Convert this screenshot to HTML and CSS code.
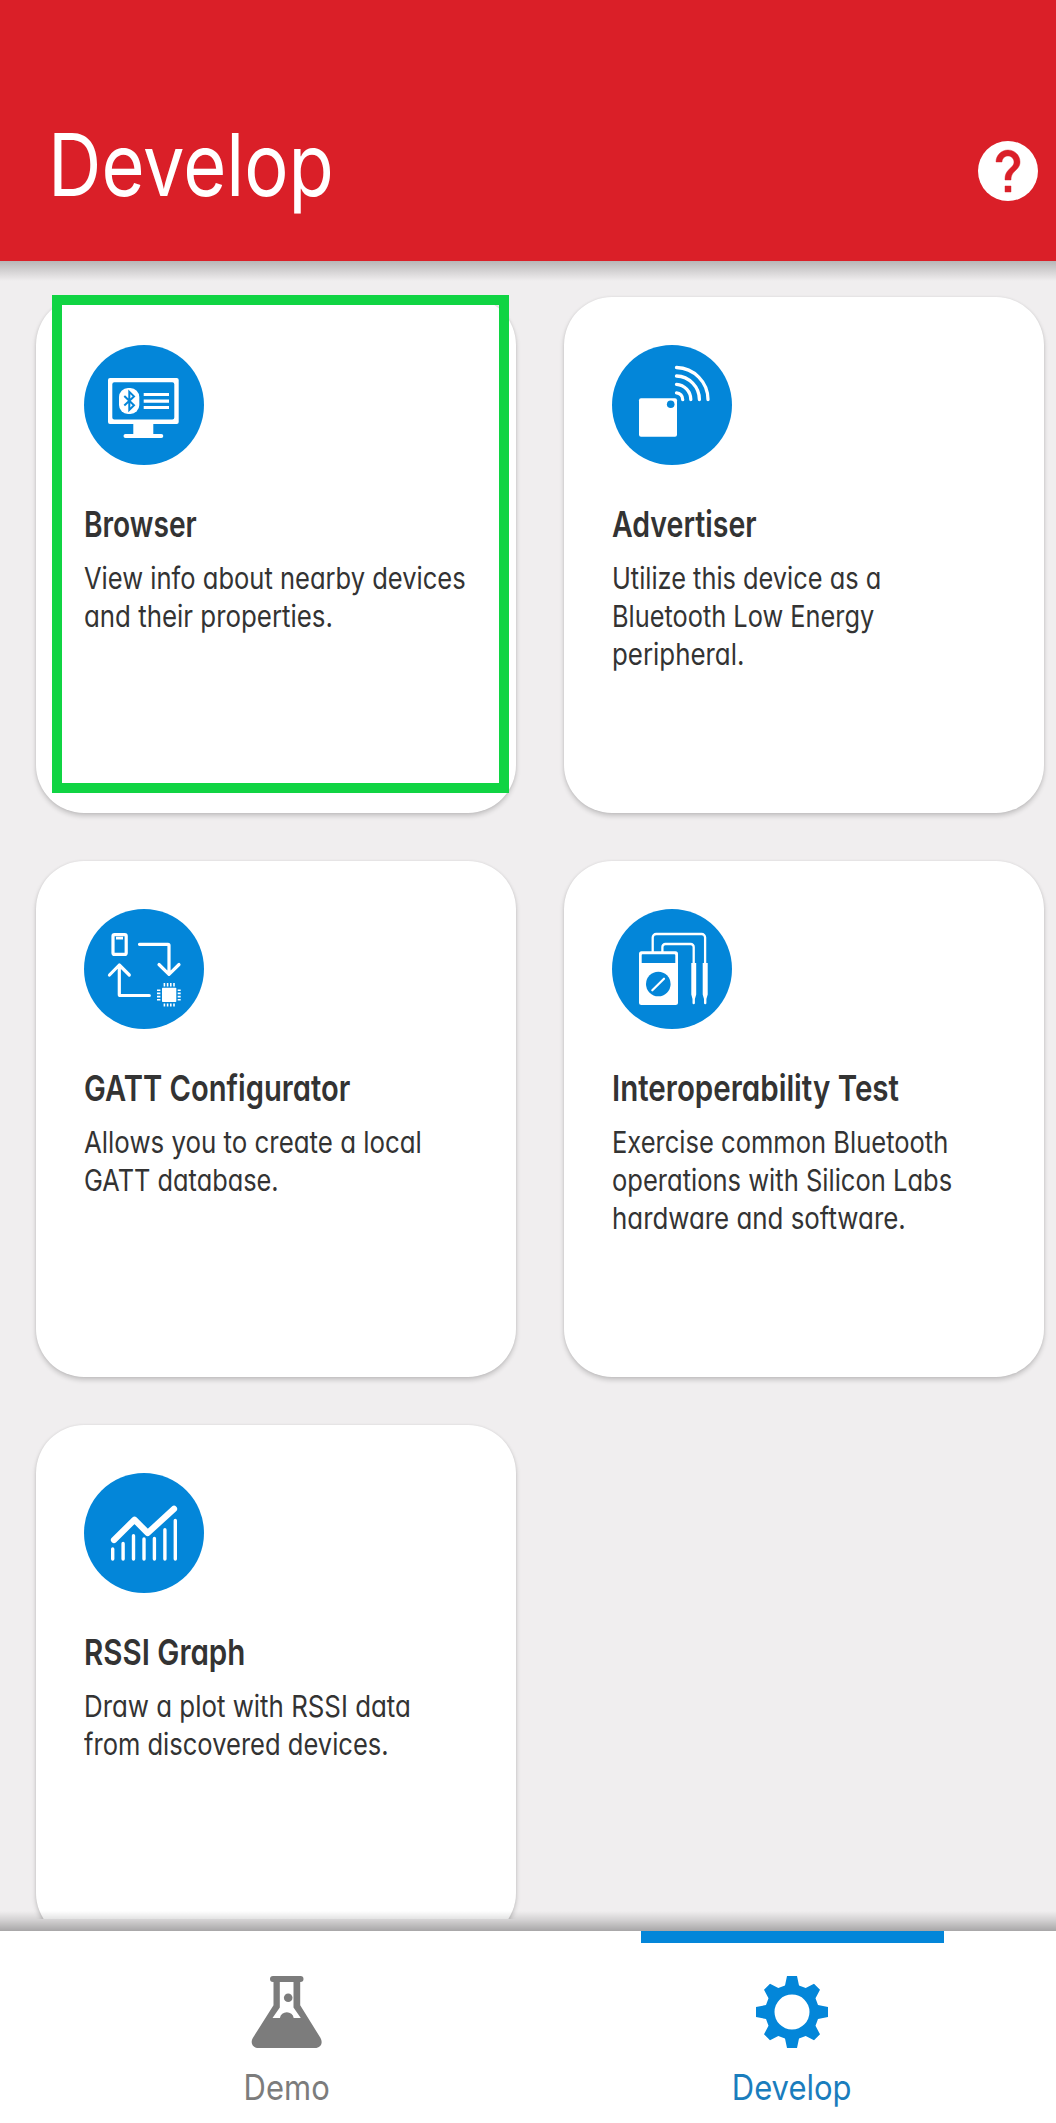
FILE: index.html
```
<!DOCTYPE html>
<html lang="en">
<head>
<meta charset="utf-8">
<title>Develop</title>
<link rel="stylesheet" href="styles.css">
</head>
<body>
<div class="app">
  <header class="top-bar">
    <h1 class="top-title">Develop</h1>
    <svg class="help" viewBox="0 0 24 24" role="img" aria-label="Help">
      <circle cx="12" cy="12" r="10" fill="#fff"/>
      <path class="question" d="M13 19h-2v-2h2v2zM15.07 11.25l-.9.92C13.45 12.9 13 13.5 13 15h-2v-.5c0-1.1.45-2.1 1.17-2.83l1.24-1.26c.37-.36.59-.86.59-1.41 0-1.1-.9-2-2-2s-2 .9-2 2H8c0-2.21 1.79-4 4-4s4 1.79 4 4c0 .88-.36 1.68-.93 2.25z"/>
    </svg>
  </header>

  <main class="content">
    <article class="card">
      <svg class="badge" viewBox="0 0 120 120">
        <circle class="disc" cx="60" cy="60" r="60"/>
        <path fill="#fff" fill-rule="evenodd" d="M26 33h66.700a2 2 0 0 1 2 2v42a2 2 0 0 1-2 2H26a2 2 0 0 1-2-2V35a2 2 0 0 1 2-2zM30.300 37.300a2 2 0 0 0-2 2v33.200a2 2 0 0 0 2 2h58a2 2 0 0 0 2-2V39.300a2 2 0 0 0-2-2z"/>
        <path fill="#fff" d="M49.300 78h20v11h8a2 2 0 0 1 0 4H41.500a2 2 0 0 1 0-4h7.800z"/>
        <rect x="35" y="43" width="20.300" height="26" rx="9" fill="#fff"/>
        <path class="rune" d="M40.300 51l9.700 9.300-4.700 4.600V46.800l4.700 4.600-9.700 9.200"/>
        <path class="stroke" stroke-width="3.200" d="M59.700 49.500H85M59.700 56.200H85M59.700 62.500H85"/>
      </svg>
      <h2 class="card-title w78">Browser</h2>
      <p class="line w85">View info about nearby devices</p>
      <p class="line w86">and their properties.</p>
      <div class="highlight"></div>
    </article>

    <article class="card">
      <svg class="badge" viewBox="0 0 120 120">
        <circle class="disc" cx="60" cy="60" r="60"/>
        <rect x="27" y="53.300" width="38" height="38.500" rx="2" fill="#fff"/>
        <circle class="disc" cx="58.700" cy="59.300" r="3.800"/>
        <path class="stroke round" stroke-width="3.300" d="M64.500 47.800a6.700 6.700 0 0 1 6.200 6.800M64.500 39.300a15.300 15.300 0 0 1 14.300 15.300M64.500 31a23.700 23.700 0 0 1 22.900 23.600M64.500 22.500a32.300 32.300 0 0 1 31.500 32.100"/>
      </svg>
      <h2 class="card-title w79">Advertiser</h2>
      <p class="line w84">Utilize this device as a</p>
      <p class="line w84">Bluetooth Low Energy</p>
      <p class="line w86">peripheral.</p>
    </article>

    <article class="card">
      <svg class="badge" viewBox="0 0 120 120">
        <circle class="disc" cx="60" cy="60" r="60"/>
        <rect class="stroke" stroke-width="3.200" x="29" y="25.600" width="13.200" height="19.800" rx="1.500"/>
        <path fill="#fff" d="M32 27.700h7v2.800h-7z"/>
        <path class="stroke round" stroke-width="3.200" d="M55.500 35.300H84a1 1 0 0 1 1 1V65M75 55.500L85 65.300l10-9.800M65.300 86.500h-29a1 1 0 0 1-1-1V56M25.500 66l9.800-10 10 10"/>
        <rect x="78" y="78.800" width="14.300" height="14.300" rx=".8" fill="#fff"/>
        <path class="stroke" stroke-width="1.600" d="M80.400 74v3.400M83.600 74v3.400M86.800 74v3.400M90 74v3.400M80.400 94.500v3M83.600 94.500v3M86.800 94.500v3M90 94.500v3M73 81.200h3.400M73 84.400h3.400M73 87.600h3.400M73 90.800h3.400M93.700 81.200h3M93.700 84.400h3M93.700 87.600h3M93.700 90.800h3"/>
      </svg>
      <h2 class="card-title w81">GATT Configurator</h2>
      <p class="line w86">Allows you to create a local</p>
      <p class="line w84">GATT database.</p>
    </article>

    <article class="card">
      <svg class="badge" viewBox="0 0 120 120">
        <circle class="disc" cx="60" cy="60" r="60"/>
        <rect x="27" y="42.300" width="39" height="53.700" rx="2.500" fill="#fff"/>
        <path class="disc" d="M31 45.300h31.300a1 1 0 0 1 1 1V54H29.700v-7.700a1 1 0 0 1 1.300-1z"/>
        <circle class="disc" cx="46.300" cy="75" r="12.300"/>
        <path class="stroke round" stroke-width="2.200" d="M40.300 81.300L52 69.700"/>
        <path class="stroke" stroke-width="2.300" d="M40.700 43V28.500a3.500 3.500 0 0 1 3.500-3.500h45.400a3.500 3.500 0 0 1 3.500 3.500V55M50.400 43v-5a3 3 0 0 1 3-3h25.300a3 3 0 0 1 3 3v17"/>
        <path fill="#fff" d="M79.300 54h4.900v31.500l-1.300 4.500v4a1.200 1.200 0 0 1-2.400 0v-4l-1.200-4.500zM90.700 54h5v31.500l-1.300 4.500v4a1.200 1.200 0 0 1-2.400 0v-4l-1.300-4.500z"/>
      </svg>
      <h2 class="card-title w82">Interoperability Test</h2>
      <p class="line w85">Exercise common Bluetooth</p>
      <p class="line w85">operations with Silicon Labs</p>
      <p class="line w86">hardware and software.</p>
    </article>

    <article class="card">
      <svg class="badge" viewBox="0 0 120 120">
        <circle class="disc" cx="60" cy="60" r="60"/>
        <path class="stroke round" stroke-width="3.400" d="M28.700 76v10M39.100 70.400V86M49.500 62.700V86M60 66v20M70.400 65.400V86M80.900 56.700V86M91.300 47.400V86"/>
        <path class="stroke round" stroke-width="6.200" d="M30 67l20.500-20.300L63.700 60 90 35.900"/>
      </svg>
      <h2 class="card-title w82">RSSI Graph</h2>
      <p class="line w86">Draw a plot with RSSI data</p>
      <p class="line w85">from discovered devices.</p>
    </article>
  </main>

  <nav class="tabs">
    <a class="tab">
      <svg class="tab-icon" viewBox="0 0 72 72">
        <path fill="currentColor" fill-rule="evenodd" d="M22 0h27.500a3 3 0 0 1 0 6h-.3v23.300l20.200 32.500C72.500 67 69.500 72 64 72H7.500C1.500 72-1 67 1.800 62l20.700-32.700V6H22a3 3 0 0 1 0-6zM28.800 6v25.500L21.500 42h7.400a7 7 0 0 1 13.800 0h7.100l-7.300-10.500V6z"/>
        <circle cx="37.200" cy="21.700" r="4.300" fill="currentColor"/>
      </svg>
      <span class="tab-label w88">Demo</span>
    </a>
    <a class="tab active">
      <svg class="tab-icon" viewBox="-36 -36 72 72">
        <path fill="currentColor" fill-rule="evenodd" d="M-5-36H5L7-26.500 13.700-24 22-28.300 28-22.300 23.500-13.700 26-7 36-5V5L26 7 23.500 13.700 28 22.300 22 28.300 13.700 24 7 26.500 5 36H-5L-7 26.500-13.700 24-22 28.300-28 22.300-23.500 13.700-26 7-36 5V-5L-26-7-23.500-13.700-28-22.300-22-28.300-13.700-24-7-26.500zM0-17.500a17.500 17.500 0 1 0 0 35a17.500 17.500 0 1 0 0-35z"/>
      </svg>
      <span class="tab-label w88">Develop</span>
    </a>
  </nav>
</div>
</body>
</html>
```
FILE: styles.css
```
* {
  box-sizing: border-box;
}

body {
  margin: 0;
  background: #f0eeef;
  color: #333;
  font-family: Inter, "Liberation Sans", sans-serif;
  font-feature-settings: "cv11";
}

h1, h2, p {
  margin: 0;
}

.app {
  display: flex;
  flex-direction: column;
  width: 1056px;
  height: 2123px;
  overflow: hidden;
}

/* Top bar */
.top-bar {
  position: relative;
  z-index: 1;
  flex: none;
  display: flex;
  justify-content: space-between;
  align-items: flex-start;
  height: 261px;
  padding: 113px 12px 0 48px;
  background: #da1f28;
  color: #fff;
}

.top-bar::after {
  content: "";
  position: absolute;
  left: 0;
  right: 0;
  top: 100%;
  height: 20px;
  background: linear-gradient(#b8b6b7, #d4d2d3 50%, rgba(240, 238, 239, 0));
}

.top-title {
  font-size: 86px;
  line-height: 104px;
  font-weight: 400;
  transform: scaleX(0.86);
  transform-origin: 0 0;
}

.help {
  width: 72px;
  height: 72px;
  margin-top: 22px;
}

.question {
  fill: #da1f28;
  stroke: #da1f28;
  stroke-width: 0.15;
}

/* Card grid */
.content {
  flex: none;
  display: grid;
  grid-template-columns: 480px 480px;
  grid-auto-rows: 516px;
  gap: 48px;
  height: 1658px;
  padding: 36px 12px 0 36px;
  overflow: hidden;
}

.card {
  position: relative;
  padding: 48px;
  border-radius: 48px;
  background: #fff;
  box-shadow: 0 3px 5px rgba(0, 0, 0, 0.18), 0 0 3px rgba(0, 0, 0, 0.08);
}

.badge {
  display: block;
  width: 120px;
  height: 120px;
  margin-bottom: 37px;
}

.disc {
  fill: #0386d9;
}

.stroke {
  fill: none;
  stroke: #fff;
}

.round {
  stroke-linecap: round;
  stroke-linejoin: round;
}

.rune {
  fill: none;
  stroke: #0386d9;
  stroke-width: 2;
}

.card-title {
  margin-bottom: 13px;
  font-size: 36px;
  line-height: 44px;
  font-weight: 600;
  white-space: nowrap;
  transform-origin: 0 0;
}

.line {
  font-size: 30px;
  line-height: 38px;
  white-space: nowrap;
  transform-origin: 0 0;
}

.highlight {
  position: absolute;
  left: 16px;
  top: -2px;
  width: 457px;
  height: 498px;
  border: 10px solid #10d443;
}

/* Condensed text widths */
.w78 { transform: scaleX(0.782); }
.w79 { transform: scaleX(0.792); }
.w81 { transform: scaleX(0.81); }
.w82 { transform: scaleX(0.82); }
.w84 { transform: scaleX(0.845); }
.w85 { transform: scaleX(0.851); }
.w86 { transform: scaleX(0.862); }
.w88 { transform: scaleX(0.885); }

/* Bottom tabs */
.tabs {
  position: relative;
  flex: none;
  display: grid;
  grid-template-columns: 505px 505px;
  height: 192px;
  margin-top: 12px;
  padding-left: 34px;
  background: #fff;
}

.tabs::before {
  content: "";
  position: absolute;
  left: 0;
  right: 0;
  bottom: 100%;
  height: 20px;
  background: linear-gradient(rgba(0, 0, 0, 0), rgba(0, 0, 0, 0.12) 45%, rgba(0, 0, 0, 0.3));
}

.tab {
  position: relative;
  display: flex;
  flex-direction: column;
  align-items: center;
  padding-top: 45px;
  color: #7c7c7c;
}

.tab.active {
  color: #0386d9;
}

.tab.active::before {
  content: "";
  position: absolute;
  top: 0;
  left: 102px;
  width: 303px;
  height: 12px;
  background: #0386d9;
}

.tab-icon {
  width: 72px;
  height: 72px;
  margin-bottom: 18px;
}

.tab-label {
  font-size: 35px;
  line-height: 42px;
}

.active .tab-label {
  color: #1a7dbd;
}
```
